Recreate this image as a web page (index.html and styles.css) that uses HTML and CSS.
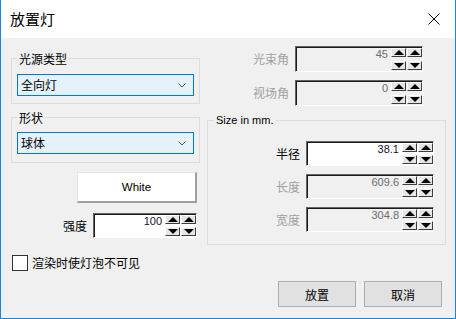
FILE: index.html
```html
<!DOCTYPE html>
<html lang="zh-CN">
<head>
<meta charset="utf-8">
<title>放置灯</title>
<link rel="stylesheet" href="styles.css">
</head>
<body>
<div class="window">
  <div class="titlebar">
    <span class="title">放置灯</span>
    <svg class="close" width="12" height="12" viewBox="0 0 12 12"><path d="M0.5 0.5 L11.5 11.5 M11.5 0.5 L0.5 11.5" stroke="#000" stroke-width="1" fill="none"/></svg>
  </div>
  <div class="body">
    <div class="main">
      <div class="col-left">
        <fieldset class="group g1">
          <legend>光源类型</legend>
          <div class="combo"><span>全向灯</span><svg class="chev" width="8" height="5" viewBox="0 0 8 5"><path d="M0.5 0.5 L4 4 L7.5 0.5" stroke="#555" fill="none"/></svg></div>
        </fieldset>
        <fieldset class="group g2">
          <legend>形状</legend>
          <div class="combo"><span>球体</span><svg class="chev" width="8" height="5" viewBox="0 0 8 5"><path d="M0.5 0.5 L4 4 L7.5 0.5" stroke="#555" fill="none"/></svg></div>
        </fieldset>
        <button class="color-btn">White</button>
        <div class="field intensity">
          <span class="lbl">强度</span>
          <div class="spin on narrow">
            <span class="val">100</span>
            <div class="arrows"><span class="ab up"></span><span class="ab up"></span><span class="ab down"></span><span class="ab down"></span></div>
          </div>
        </div>
      </div>
      <div class="col-right">
        <div class="top-field">
          <span class="lbl off">光束角</span>
          <div class="spin">
            <span class="val">45</span>
            <div class="arrows"><span class="ab up"></span><span class="ab up"></span><span class="ab down"></span><span class="ab down"></span></div>
          </div>
        </div>
        <div class="top-field">
          <span class="lbl off">视场角</span>
          <div class="spin">
            <span class="val">0</span>
            <div class="arrows"><span class="ab up"></span><span class="ab up"></span><span class="ab down"></span><span class="ab down"></span></div>
          </div>
        </div>
        <fieldset class="group size">
          <legend class="latin">Size in mm.</legend>
          <div class="field">
            <span class="lbl">半径</span>
            <div class="spin on short">
              <span class="val">38.1</span>
              <div class="arrows"><span class="ab up"></span><span class="ab up"></span><span class="ab down"></span><span class="ab down"></span></div>
            </div>
          </div>
          <div class="field">
            <span class="lbl off">长度</span>
            <div class="spin short">
              <span class="val">609.6</span>
              <div class="arrows"><span class="ab up"></span><span class="ab up"></span><span class="ab down"></span><span class="ab down"></span></div>
            </div>
          </div>
          <div class="field">
            <span class="lbl off">宽度</span>
            <div class="spin short">
              <span class="val">304.8</span>
              <div class="arrows"><span class="ab up"></span><span class="ab up"></span><span class="ab down"></span><span class="ab down"></span></div>
            </div>
          </div>
        </fieldset>
      </div>
    </div>
    <div class="check"><span class="box"></span><span>渲染时使灯泡不可见</span></div>
    <div class="actions"><button class="btn">放置</button><button class="btn">取消</button></div>
  </div>
</div>
</body>
</html>
```

FILE: styles.css
```css
* { box-sizing: border-box; }
body {
  margin: 0;
  font-family: "Noto Sans CJK SC", "Microsoft YaHei", sans-serif;
  font-size: 12px;
  color: #000;
}
.window {
  width: 456px;
  height: 319px;
  border: 1px solid #1883d7;
  border-top: 0;
  background: #f0f0f0;
  display: flex;
  flex-direction: column;
}
.titlebar {
  height: 38px;
  flex: none;
  background: #fff;
  display: flex;
  align-items: center;
  justify-content: space-between;
  padding: 0 15px 0 9px;
}
.title { font-size: 15px; line-height: 20px; }
.close { display: block; }
.body {
  flex: 1;
  display: flex;
  flex-direction: column;
  padding: 8px 0 0 10px;
}
.main {
  display: flex;
  gap: 7px;
  padding-right: 9px;
  align-items: flex-start;
}
.col-left {
  width: 189px;
  display: flex;
  flex-direction: column;
  padding-top: 4px;
}
.col-right {
  width: 239px;
  display: flex;
  flex-direction: column;
}
.group {
  margin: 0;
  min-width: 0;
  border: 1px solid #dcdcdc;
}
.group legend {
  padding: 0 2px;
  line-height: 17px;
}
.g1 { padding: 7px 5px 7px 5px; }
.g2 { margin-top: 5px; padding: 6px 5px 8px 5px; }
.combo {
  height: 22px;
  display: flex;
  align-items: center;
  justify-content: space-between;
  padding: 0 7px 0 3px;
  border: 1px solid #0078d7;
  background: #e5f1fb;
  line-height: 20px;
}
.chev { display: block; }
.color-btn {
  align-self: flex-end;
  margin: 9px 3px 0 0;
  width: 120px;
  height: 31px;
  padding: 0;
  background: #fff;
  border: 1px solid #e3e3e3;
  border-right: 2px solid #a0a0a0;
  border-bottom: 2px solid #a0a0a0;
  font: 11.5px "Liberation Sans", Arial, sans-serif;
  color: #000;
}
.field {
  display: flex;
  align-items: center;
  justify-content: flex-end;
  gap: 6px;
}
.intensity { margin-top: 10px; padding-right: 3px; }
.top-field {
  display: grid;
  grid-template-columns: 82px 128px;
  column-gap: 6px;
  align-items: center;
}
.top-field + .top-field { margin-top: 8px; }
.lbl { line-height: 16px; white-space: nowrap; text-align: right; }
.lbl.off { color: #a0a0a0; }
.size {
  margin-top: 7px;
  padding: 13px 11px 12px 6px;
}
.size legend.latin {
  font: 11px/15px "Liberation Sans", Arial, sans-serif;
}
.size .field + .field { margin-top: 8px; }
.spin {
  display: flex;
  width: 128px;
  height: 26px;
  border: 1px solid;
  border-color: #646464 #fff #fff #646464;
  box-shadow: inset 1px 1px 0 #1a1a1a;
  padding: 1px 0 0 1px;
  background: #f0f0f0;
}
.spin.short { height: 25px; }
.spin.narrow { width: 104px; height: 25px; }
.spin.on { background: #fff; }
.val {
  flex: 1;
  text-align: right;
  padding-right: 3px;
  font: 11px/13px "Liberation Sans", Arial, sans-serif;
  color: #6d6d6d;
}
.spin.on .val { color: #1a1030; }
.arrows {
  display: grid;
  grid-template-columns: 15px 15px;
  grid-template-rows: 9px 9px;
  column-gap: 1px;
  align-content: space-between;
  padding-bottom: 1px;
}
.ab {
  background: #e6e6e6;
  border: 1px solid;
  border-color: #fff #3c3c3c #3c3c3c #fff;
  display: flex;
  align-items: center;
  justify-content: center;
}
.ab::before {
  content: "";
  border-left: 5px solid transparent;
  border-right: 5px solid transparent;
}
.up::before { border-bottom: 5px solid #000; }
.down::before { border-top: 5px solid #000; }
.check {
  display: flex;
  align-items: center;
  gap: 4px;
  margin: 10px 0 0 1px;
  height: 16px;
  line-height: 16px;
}
.box {
  width: 16px;
  height: 16px;
  border: 1px solid #333;
  background: #fff;
}
.actions {
  display: flex;
  justify-content: flex-end;
  gap: 8px;
  margin-top: 10px;
  padding-right: 13px;
}
.btn {
  width: 78px;
  height: 26px;
  padding: 0;
  background: #e1e1e1;
  border: 1px solid #adadad;
  font: 12px "Noto Sans CJK SC", sans-serif;
  color: #000;
}
```
